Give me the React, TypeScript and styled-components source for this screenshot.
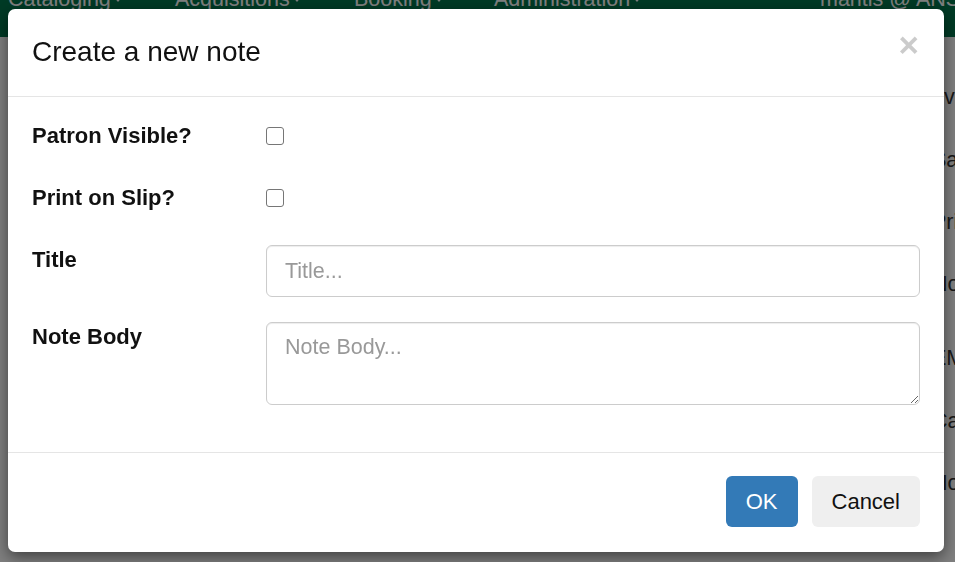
import * as React from "react";
import styled, { createGlobalStyle } from "styled-components";

const GlobalStyle = createGlobalStyle`
  html, body {
    margin: 0;
    padding: 0;
    background: #ffffff;
    overflow: hidden;
  }
  body {
    font-family: "Liberation Sans", Arial, sans-serif;
    color: #333;
  }
`;

const Navbar = styled.div`
  height: 37px;
  background: #00744a;
  overflow: hidden;
`;

const NavList = styled.ul`
  display: flex;
  margin: -16px 0 0;
  padding: 0 0 0 8px;
  list-style: none;
`;

const NavItem = styled.li<{ $w: number }>`
  width: ${(p) => p.$w}px;
  flex: none;
  color: #ffffff;
  font-size: 21.5px;
  line-height: 30px;
  white-space: nowrap;
  display: flex;
  align-items: center;
  gap: 1px;
`;

const PageBody = styled.div`
  display: flex;
`;

const MainCol = styled.div`
  width: 932px;
  flex: none;
`;

const SideCol = styled.div`
  display: flex;
  flex-direction: column;
  padding-top: 45px;
  font-size: 21.5px;
  line-height: 30px;
  color: #333;
  white-space: nowrap;
`;

const SideLine = styled.div<{ $gap: number }>`
  margin-bottom: ${(p) => p.$gap}px;
`;

const Backdrop = styled.div`
  position: fixed;
  inset: 0;
  background: rgba(0, 0, 0, 0.5);
`;

const Dialog = styled.div`
  margin: 9px 0 0 8px;
  width: 936px;
  background: #ffffff;
  border-radius: 7px;
  box-shadow: 0 5px 15px rgba(0, 0, 0, 0.5);
  overflow: hidden;
`;

const Header = styled.div`
  display: flex;
  justify-content: space-between;
  align-items: flex-start;
  padding: 24px 25px 25px 24px;
  border-bottom: 1px solid #e5e5e5;
`;

const Title = styled.h4`
  margin: 0;
  font-size: 28px;
  line-height: 38px;
  font-weight: normal;
  color: #111;
`;

const Close = styled.button`
  border: none;
  background: none;
  padding: 0;
  margin-top: -6px;
  font-family: "Liberation Sans", Arial, sans-serif;
  font-size: 35px;
  font-weight: bold;
  line-height: 1;
  color: #000;
  opacity: 0.2;
  cursor: pointer;
`;

const Body = styled.div`
  display: flex;
  flex-direction: column;
  gap: 25px;
  padding: 24px 24px 47px;
`;

const Row = styled.div<{ $h?: number }>`
  display: grid;
  grid-template-columns: 234px 1fr;
  min-height: ${(p) => p.$h ?? 0}px;
`;

const Label = styled.label`
  font-size: 22px;
  line-height: 30px;
  font-weight: bold;
  color: #111;
`;

const Check = styled.input.attrs({ type: "checkbox" })`
  appearance: none;
  margin: 6px 0 0;
  width: 18px;
  height: 18px;
  border: 1.5px solid #767676;
  border-radius: 3px;
  background: #fff;
  box-sizing: border-box;
`;

const fieldCss = `
  box-sizing: border-box;
  width: 100%;
  margin: 0;
  padding: 9px 18px;
  font-family: "Liberation Sans", Arial, sans-serif;
  font-size: 21.5px;
  line-height: 30px;
  color: #555;
  background: #fff;
  border: 1px solid #ccc;
  border-radius: 6px;
  box-shadow: inset 0 1px 1px rgba(0, 0, 0, 0.075);
  outline: none;
  &::placeholder {
    color: #999;
  }
`;

const TextInput = styled.input`
  ${fieldCss}
  height: 52px;
`;

const TextArea = styled.textarea`
  ${fieldCss}
  height: 83px;
  resize: vertical;
  display: block;
`;

const Footer = styled.div`
  display: flex;
  justify-content: flex-end;
  gap: 14px;
  padding: 23px 24px 25px;
  border-top: 1px solid #e5e5e5;
`;

const Button = styled.button<{ $primary?: boolean }>`
  height: 51px;
  padding: 0 20px;
  font-family: "Liberation Sans", Arial, sans-serif;
  font-size: 22px;
  border: none;
  border-radius: 6px;
  color: ${(p) => (p.$primary ? "#fff" : "#111")};
  background: ${(p) => (p.$primary ? "#337ab7" : "#efefef")};
  cursor: pointer;
`;

const Caret = () => (
  <svg width="12" height="8" viewBox="0 0 12 8">
    <path d="M1 1 L6 7 L11 1 Z" fill="#fff" />
  </svg>
);

const navItems = [
  { label: "Cataloging", w: 167 },
  { label: "Acquisitions", w: 179 },
  { label: "Booking", w: 140 },
  { label: "Administration", w: 326 },
];

const sideLines = [
  { text: "ev", gap: 33 },
  { text: "Sa", gap: 32 },
  { text: "Pri", gap: 32 },
  { text: "No", gap: 44 },
  { text: "EM", gap: 33 },
  { text: "Ca", gap: 32 },
  { text: "Ho", gap: 32 },
];

export default function App() {
  return (
    <>
      <GlobalStyle />
      <Navbar>
        <NavList>
          {navItems.map((n) => (
            <NavItem key={n.label} $w={n.w}>
              {n.label}
              <Caret />
            </NavItem>
          ))}
          <NavItem $w={200}>mantis @ ANS</NavItem>
        </NavList>
      </Navbar>
      <PageBody>
        <MainCol />
        <SideCol>
          {sideLines.map((l, i) => (
            <SideLine key={i} $gap={l.gap}>
              {l.text}
            </SideLine>
          ))}
        </SideCol>
      </PageBody>
      <Backdrop>
        <Dialog>
          <Header>
            <Title>Create a new note</Title>
            <Close aria-label="Close">×</Close>
          </Header>
          <Body>
            <Row $h={37}>
              <Label>Patron Visible?</Label>
              <div>
                <Check />
              </div>
            </Row>
            <Row $h={37}>
              <Label>Print on Slip?</Label>
              <div>
                <Check />
              </div>
            </Row>
            <Row>
              <Label>Title</Label>
              <TextInput placeholder="Title..." />
            </Row>
            <Row>
              <Label>Note Body</Label>
              <TextArea placeholder="Note Body..." />
            </Row>
          </Body>
          <Footer>
            <Button $primary>OK</Button>
            <Button>Cancel</Button>
          </Footer>
        </Dialog>
      </Backdrop>
    </>
  );
}
